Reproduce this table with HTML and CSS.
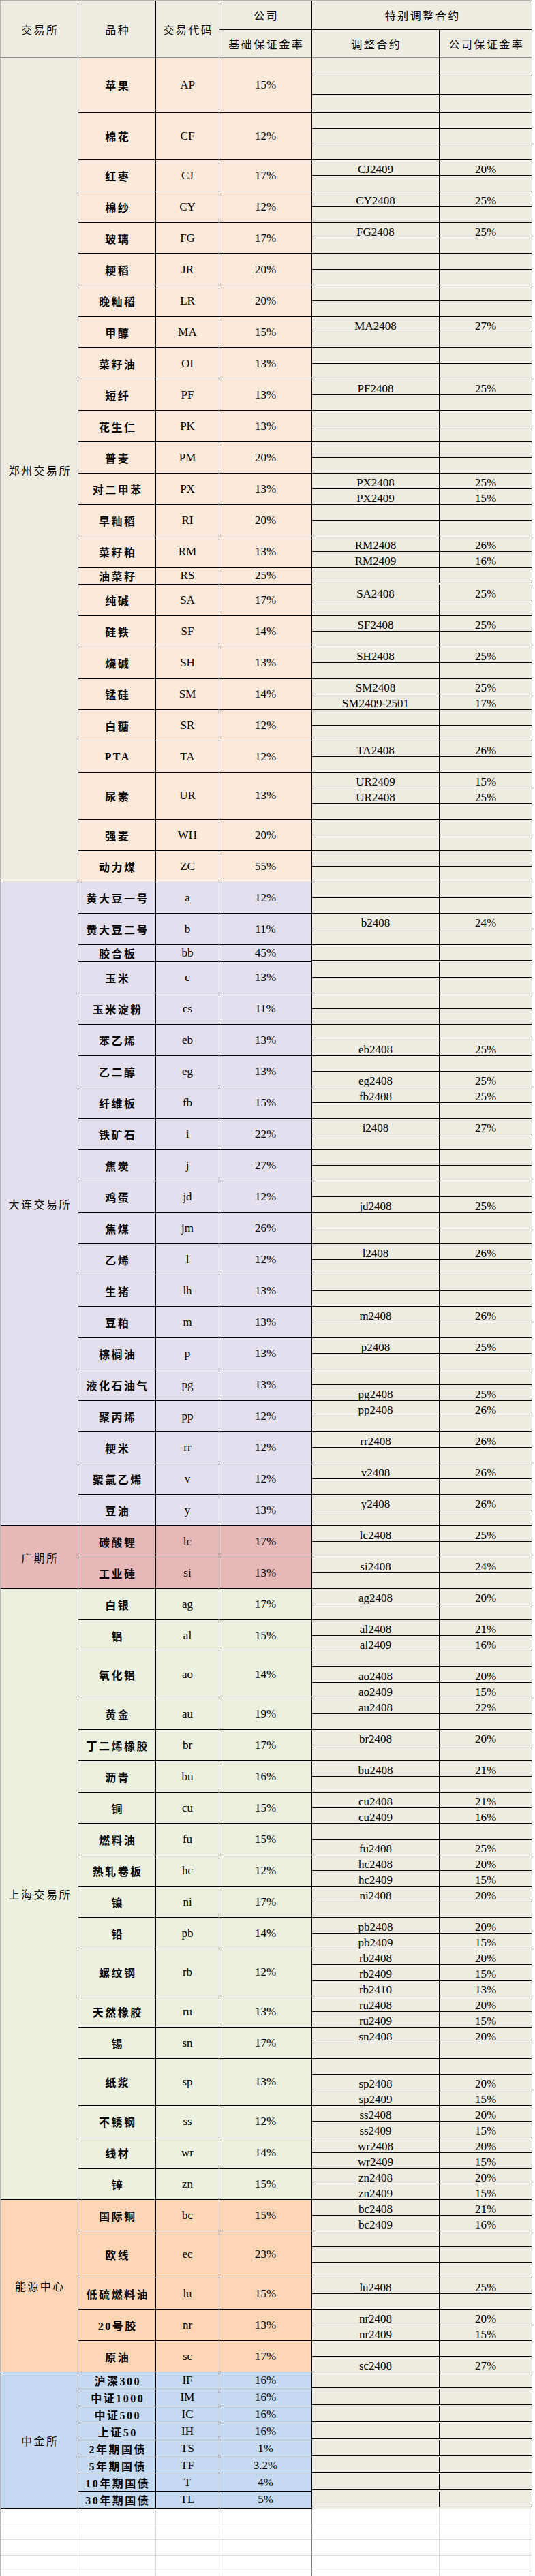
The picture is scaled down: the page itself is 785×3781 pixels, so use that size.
FILE: index.html
```html
<!DOCTYPE html>
<html lang="zh-CN">
<head>
<meta charset="utf-8">
<title>保证金率</title>
<link rel="stylesheet" href="styles.css">
</head>
<body>
<div class="sheet">
  <div class="head">
    <div class="h h-ex">交易所</div>
    <div class="h h-name">品种</div>
    <div class="h h-code">交易代码</div>
    <div class="h h-co">公司</div>
    <div class="h h-sp">特别调整合约</div>
    <div class="h h-base">基础保证金率</div>
    <div class="h h-ct">调整合约</div>
    <div class="h h-cr">公司保证金率</div>
  </div>

  <section class="ex zz">
    <div class="exn">郑州交易所</div>
    <div class="prods">
      <div class="prod"><div class="nm">苹果</div><div class="cd">AP</div><div class="rt">15%</div><div class="sp">
        <div class="sub tall"><span class="ct"></span><span class="cr"></span></div>
        <div class="sub tall"><span class="ct"></span><span class="cr"></span></div>
        <div class="sub tall"><span class="ct"></span><span class="cr"></span></div></div></div>
      <div class="prod"><div class="nm">棉花</div><div class="cd">CF</div><div class="rt">12%</div><div class="sp">
        <div class="sub"><span class="ct"></span><span class="cr"></span></div>
        <div class="sub"><span class="ct"></span><span class="cr"></span></div>
        <div class="sub"><span class="ct"></span><span class="cr"></span></div></div></div>
      <div class="prod"><div class="nm">红枣</div><div class="cd">CJ</div><div class="rt">17%</div><div class="sp">
        <div class="sub"><span class="ct">CJ2409</span><span class="cr">20%</span></div>
        <div class="sub"><span class="ct"></span><span class="cr"></span></div></div></div>
      <div class="prod"><div class="nm">棉纱</div><div class="cd">CY</div><div class="rt">12%</div><div class="sp">
        <div class="sub"><span class="ct">CY2408</span><span class="cr">25%</span></div>
        <div class="sub"><span class="ct"></span><span class="cr"></span></div></div></div>
      <div class="prod"><div class="nm">玻璃</div><div class="cd">FG</div><div class="rt">17%</div><div class="sp">
        <div class="sub"><span class="ct">FG2408</span><span class="cr">25%</span></div>
        <div class="sub"><span class="ct"></span><span class="cr"></span></div></div></div>
      <div class="prod"><div class="nm">粳稻</div><div class="cd">JR</div><div class="rt">20%</div><div class="sp">
        <div class="sub"><span class="ct"></span><span class="cr"></span></div>
        <div class="sub"><span class="ct"></span><span class="cr"></span></div></div></div>
      <div class="prod"><div class="nm">晚籼稻</div><div class="cd">LR</div><div class="rt">20%</div><div class="sp">
        <div class="sub"><span class="ct"></span><span class="cr"></span></div>
        <div class="sub"><span class="ct"></span><span class="cr"></span></div></div></div>
      <div class="prod"><div class="nm">甲醇</div><div class="cd">MA</div><div class="rt">15%</div><div class="sp">
        <div class="sub"><span class="ct">MA2408</span><span class="cr">27%</span></div>
        <div class="sub"><span class="ct"></span><span class="cr"></span></div></div></div>
      <div class="prod"><div class="nm">菜籽油</div><div class="cd">OI</div><div class="rt">13%</div><div class="sp">
        <div class="sub"><span class="ct"></span><span class="cr"></span></div>
        <div class="sub"><span class="ct"></span><span class="cr"></span></div></div></div>
      <div class="prod"><div class="nm">短纤</div><div class="cd">PF</div><div class="rt">13%</div><div class="sp">
        <div class="sub"><span class="ct">PF2408</span><span class="cr">25%</span></div>
        <div class="sub"><span class="ct"></span><span class="cr"></span></div></div></div>
      <div class="prod"><div class="nm">花生仁</div><div class="cd">PK</div><div class="rt">13%</div><div class="sp">
        <div class="sub"><span class="ct"></span><span class="cr"></span></div>
        <div class="sub"><span class="ct"></span><span class="cr"></span></div></div></div>
      <div class="prod"><div class="nm">普麦</div><div class="cd">PM</div><div class="rt">20%</div><div class="sp">
        <div class="sub"><span class="ct"></span><span class="cr"></span></div>
        <div class="sub"><span class="ct"></span><span class="cr"></span></div></div></div>
      <div class="prod"><div class="nm">对二甲苯</div><div class="cd">PX</div><div class="rt">13%</div><div class="sp">
        <div class="sub"><span class="ct">PX2408</span><span class="cr">25%</span></div>
        <div class="sub"><span class="ct">PX2409</span><span class="cr">15%</span></div></div></div>
      <div class="prod"><div class="nm">早籼稻</div><div class="cd">RI</div><div class="rt">20%</div><div class="sp">
        <div class="sub"><span class="ct"></span><span class="cr"></span></div>
        <div class="sub"><span class="ct"></span><span class="cr"></span></div></div></div>
      <div class="prod"><div class="nm">菜籽粕</div><div class="cd">RM</div><div class="rt">13%</div><div class="sp">
        <div class="sub"><span class="ct">RM2408</span><span class="cr">26%</span></div>
        <div class="sub"><span class="ct">RM2409</span><span class="cr">16%</span></div></div></div>
      <div class="prod"><div class="nm">油菜籽</div><div class="cd">RS</div><div class="rt">25%</div><div class="sp">
        <div class="sub"><span class="ct"></span><span class="cr"></span></div></div></div>
      <div class="prod"><div class="nm">纯碱</div><div class="cd">SA</div><div class="rt">17%</div><div class="sp">
        <div class="sub"><span class="ct">SA2408</span><span class="cr">25%</span></div>
        <div class="sub"><span class="ct"></span><span class="cr"></span></div></div></div>
      <div class="prod"><div class="nm">硅铁</div><div class="cd">SF</div><div class="rt">14%</div><div class="sp">
        <div class="sub"><span class="ct">SF2408</span><span class="cr">25%</span></div>
        <div class="sub"><span class="ct"></span><span class="cr"></span></div></div></div>
      <div class="prod"><div class="nm">烧碱</div><div class="cd">SH</div><div class="rt">13%</div><div class="sp">
        <div class="sub"><span class="ct">SH2408</span><span class="cr">25%</span></div>
        <div class="sub"><span class="ct"></span><span class="cr"></span></div></div></div>
      <div class="prod"><div class="nm">锰硅</div><div class="cd">SM</div><div class="rt">14%</div><div class="sp">
        <div class="sub"><span class="ct">SM2408</span><span class="cr">25%</span></div>
        <div class="sub"><span class="ct">SM2409-2501</span><span class="cr">17%</span></div></div></div>
      <div class="prod"><div class="nm">白糖</div><div class="cd">SR</div><div class="rt">12%</div><div class="sp">
        <div class="sub"><span class="ct"></span><span class="cr"></span></div>
        <div class="sub"><span class="ct"></span><span class="cr"></span></div></div></div>
      <div class="prod"><div class="nm">PTA</div><div class="cd">TA</div><div class="rt">12%</div><div class="sp">
        <div class="sub"><span class="ct">TA2408</span><span class="cr">26%</span></div>
        <div class="sub"><span class="ct"></span><span class="cr"></span></div></div></div>
      <div class="prod"><div class="nm">尿素</div><div class="cd">UR</div><div class="rt">13%</div><div class="sp">
        <div class="sub"><span class="ct">UR2409</span><span class="cr">15%</span></div>
        <div class="sub"><span class="ct">UR2408</span><span class="cr">25%</span></div>
        <div class="sub"><span class="ct"></span><span class="cr"></span></div></div></div>
      <div class="prod"><div class="nm">强麦</div><div class="cd">WH</div><div class="rt">20%</div><div class="sp">
        <div class="sub"><span class="ct"></span><span class="cr"></span></div>
        <div class="sub"><span class="ct"></span><span class="cr"></span></div></div></div>
      <div class="prod"><div class="nm">动力煤</div><div class="cd">ZC</div><div class="rt">55%</div><div class="sp">
        <div class="sub"><span class="ct"></span><span class="cr"></span></div>
        <div class="sub"><span class="ct"></span><span class="cr"></span></div></div></div>
    </div>
  </section>

  <section class="ex dl">
    <div class="exn">大连交易所</div>
    <div class="prods">
      <div class="prod"><div class="nm">黄大豆一号</div><div class="cd">a</div><div class="rt">12%</div><div class="sp">
        <div class="sub"><span class="ct"></span><span class="cr"></span></div>
        <div class="sub"><span class="ct"></span><span class="cr"></span></div></div></div>
      <div class="prod"><div class="nm">黄大豆二号</div><div class="cd">b</div><div class="rt">11%</div><div class="sp">
        <div class="sub"><span class="ct">b2408</span><span class="cr">24%</span></div>
        <div class="sub"><span class="ct"></span><span class="cr"></span></div></div></div>
      <div class="prod"><div class="nm">胶合板</div><div class="cd">bb</div><div class="rt">45%</div><div class="sp">
        <div class="sub"><span class="ct"></span><span class="cr"></span></div></div></div>
      <div class="prod"><div class="nm">玉米</div><div class="cd">c</div><div class="rt">13%</div><div class="sp">
        <div class="sub"><span class="ct"></span><span class="cr"></span></div>
        <div class="sub"><span class="ct"></span><span class="cr"></span></div></div></div>
      <div class="prod"><div class="nm">玉米淀粉</div><div class="cd">cs</div><div class="rt">11%</div><div class="sp">
        <div class="sub"><span class="ct"></span><span class="cr"></span></div>
        <div class="sub"><span class="ct"></span><span class="cr"></span></div></div></div>
      <div class="prod"><div class="nm">苯乙烯</div><div class="cd">eb</div><div class="rt">13%</div><div class="sp">
        <div class="sub"><span class="ct"></span><span class="cr"></span></div>
        <div class="sub"><span class="ct">eb2408</span><span class="cr">25%</span></div></div></div>
      <div class="prod"><div class="nm">乙二醇</div><div class="cd">eg</div><div class="rt">13%</div><div class="sp">
        <div class="sub"><span class="ct"></span><span class="cr"></span></div>
        <div class="sub"><span class="ct">eg2408</span><span class="cr">25%</span></div></div></div>
      <div class="prod"><div class="nm">纤维板</div><div class="cd">fb</div><div class="rt">15%</div><div class="sp">
        <div class="sub"><span class="ct">fb2408</span><span class="cr">25%</span></div>
        <div class="sub"><span class="ct"></span><span class="cr"></span></div></div></div>
      <div class="prod"><div class="nm">铁矿石</div><div class="cd">i</div><div class="rt">22%</div><div class="sp">
        <div class="sub"><span class="ct">i2408</span><span class="cr">27%</span></div>
        <div class="sub"><span class="ct"></span><span class="cr"></span></div></div></div>
      <div class="prod"><div class="nm">焦炭</div><div class="cd">j</div><div class="rt">27%</div><div class="sp">
        <div class="sub"><span class="ct"></span><span class="cr"></span></div>
        <div class="sub"><span class="ct"></span><span class="cr"></span></div></div></div>
      <div class="prod"><div class="nm">鸡蛋</div><div class="cd">jd</div><div class="rt">12%</div><div class="sp">
        <div class="sub"><span class="ct"></span><span class="cr"></span></div>
        <div class="sub"><span class="ct">jd2408</span><span class="cr">25%</span></div></div></div>
      <div class="prod"><div class="nm">焦煤</div><div class="cd">jm</div><div class="rt">26%</div><div class="sp">
        <div class="sub"><span class="ct"></span><span class="cr"></span></div>
        <div class="sub"><span class="ct"></span><span class="cr"></span></div></div></div>
      <div class="prod"><div class="nm">乙烯</div><div class="cd">l</div><div class="rt">12%</div><div class="sp">
        <div class="sub"><span class="ct">l2408</span><span class="cr">26%</span></div>
        <div class="sub"><span class="ct"></span><span class="cr"></span></div></div></div>
      <div class="prod"><div class="nm">生猪</div><div class="cd">lh</div><div class="rt">13%</div><div class="sp">
        <div class="sub"><span class="ct"></span><span class="cr"></span></div>
        <div class="sub"><span class="ct"></span><span class="cr"></span></div></div></div>
      <div class="prod"><div class="nm">豆粕</div><div class="cd">m</div><div class="rt">13%</div><div class="sp">
        <div class="sub"><span class="ct">m2408</span><span class="cr">26%</span></div>
        <div class="sub"><span class="ct"></span><span class="cr"></span></div></div></div>
      <div class="prod"><div class="nm">棕榈油</div><div class="cd">p</div><div class="rt">13%</div><div class="sp">
        <div class="sub"><span class="ct">p2408</span><span class="cr">25%</span></div>
        <div class="sub"><span class="ct"></span><span class="cr"></span></div></div></div>
      <div class="prod"><div class="nm">液化石油气</div><div class="cd">pg</div><div class="rt">13%</div><div class="sp">
        <div class="sub"><span class="ct"></span><span class="cr"></span></div>
        <div class="sub"><span class="ct">pg2408</span><span class="cr">25%</span></div></div></div>
      <div class="prod"><div class="nm">聚丙烯</div><div class="cd">pp</div><div class="rt">12%</div><div class="sp">
        <div class="sub"><span class="ct">pp2408</span><span class="cr">26%</span></div>
        <div class="sub"><span class="ct"></span><span class="cr"></span></div></div></div>
      <div class="prod"><div class="nm">粳米</div><div class="cd">rr</div><div class="rt">12%</div><div class="sp">
        <div class="sub"><span class="ct">rr2408</span><span class="cr">26%</span></div>
        <div class="sub"><span class="ct"></span><span class="cr"></span></div></div></div>
      <div class="prod"><div class="nm">聚氯乙烯</div><div class="cd">v</div><div class="rt">12%</div><div class="sp">
        <div class="sub"><span class="ct">v2408</span><span class="cr">26%</span></div>
        <div class="sub"><span class="ct"></span><span class="cr"></span></div></div></div>
      <div class="prod"><div class="nm">豆油</div><div class="cd">y</div><div class="rt">13%</div><div class="sp">
        <div class="sub"><span class="ct">y2408</span><span class="cr">26%</span></div>
        <div class="sub"><span class="ct"></span><span class="cr"></span></div></div></div>
    </div>
  </section>

  <section class="ex gz">
    <div class="exn">广期所</div>
    <div class="prods">
      <div class="prod"><div class="nm">碳酸锂</div><div class="cd">lc</div><div class="rt">17%</div><div class="sp">
        <div class="sub"><span class="ct">lc2408</span><span class="cr">25%</span></div>
        <div class="sub"><span class="ct"></span><span class="cr"></span></div></div></div>
      <div class="prod"><div class="nm">工业硅</div><div class="cd">si</div><div class="rt">13%</div><div class="sp">
        <div class="sub"><span class="ct">si2408</span><span class="cr">24%</span></div>
        <div class="sub"><span class="ct"></span><span class="cr"></span></div></div></div>
    </div>
  </section>

  <section class="ex sh">
    <div class="exn">上海交易所</div>
    <div class="prods">
      <div class="prod"><div class="nm">白银</div><div class="cd">ag</div><div class="rt">17%</div><div class="sp">
        <div class="sub"><span class="ct">ag2408</span><span class="cr">20%</span></div>
        <div class="sub"><span class="ct"></span><span class="cr"></span></div></div></div>
      <div class="prod"><div class="nm">铝</div><div class="cd">al</div><div class="rt">15%</div><div class="sp">
        <div class="sub"><span class="ct">al2408</span><span class="cr">21%</span></div>
        <div class="sub"><span class="ct">al2409</span><span class="cr">16%</span></div></div></div>
      <div class="prod"><div class="nm">氧化铝</div><div class="cd">ao</div><div class="rt">14%</div><div class="sp">
        <div class="sub"><span class="ct"></span><span class="cr"></span></div>
        <div class="sub"><span class="ct">ao2408</span><span class="cr">20%</span></div>
        <div class="sub"><span class="ct">ao2409</span><span class="cr">15%</span></div></div></div>
      <div class="prod"><div class="nm">黄金</div><div class="cd">au</div><div class="rt">19%</div><div class="sp">
        <div class="sub"><span class="ct">au2408</span><span class="cr">22%</span></div>
        <div class="sub"><span class="ct"></span><span class="cr"></span></div></div></div>
      <div class="prod"><div class="nm">丁二烯橡胶</div><div class="cd">br</div><div class="rt">17%</div><div class="sp">
        <div class="sub"><span class="ct">br2408</span><span class="cr">20%</span></div>
        <div class="sub"><span class="ct"></span><span class="cr"></span></div></div></div>
      <div class="prod"><div class="nm">沥青</div><div class="cd">bu</div><div class="rt">16%</div><div class="sp">
        <div class="sub"><span class="ct">bu2408</span><span class="cr">21%</span></div>
        <div class="sub"><span class="ct"></span><span class="cr"></span></div></div></div>
      <div class="prod"><div class="nm">铜</div><div class="cd">cu</div><div class="rt">15%</div><div class="sp">
        <div class="sub"><span class="ct">cu2408</span><span class="cr">21%</span></div>
        <div class="sub"><span class="ct">cu2409</span><span class="cr">16%</span></div></div></div>
      <div class="prod"><div class="nm">燃料油</div><div class="cd">fu</div><div class="rt">15%</div><div class="sp">
        <div class="sub"><span class="ct"></span><span class="cr"></span></div>
        <div class="sub"><span class="ct">fu2408</span><span class="cr">25%</span></div></div></div>
      <div class="prod"><div class="nm">热轧卷板</div><div class="cd">hc</div><div class="rt">12%</div><div class="sp">
        <div class="sub"><span class="ct">hc2408</span><span class="cr">20%</span></div>
        <div class="sub"><span class="ct">hc2409</span><span class="cr">15%</span></div></div></div>
      <div class="prod"><div class="nm">镍</div><div class="cd">ni</div><div class="rt">17%</div><div class="sp">
        <div class="sub"><span class="ct">ni2408</span><span class="cr">20%</span></div>
        <div class="sub"><span class="ct"></span><span class="cr"></span></div></div></div>
      <div class="prod"><div class="nm">铅</div><div class="cd">pb</div><div class="rt">14%</div><div class="sp">
        <div class="sub"><span class="ct">pb2408</span><span class="cr">20%</span></div>
        <div class="sub"><span class="ct">pb2409</span><span class="cr">15%</span></div></div></div>
      <div class="prod"><div class="nm">螺纹钢</div><div class="cd">rb</div><div class="rt">12%</div><div class="sp">
        <div class="sub"><span class="ct">rb2408</span><span class="cr">20%</span></div>
        <div class="sub"><span class="ct">rb2409</span><span class="cr">15%</span></div>
        <div class="sub"><span class="ct">rb2410</span><span class="cr">13%</span></div></div></div>
      <div class="prod"><div class="nm">天然橡胶</div><div class="cd">ru</div><div class="rt">13%</div><div class="sp">
        <div class="sub"><span class="ct">ru2408</span><span class="cr">20%</span></div>
        <div class="sub"><span class="ct">ru2409</span><span class="cr">15%</span></div></div></div>
      <div class="prod"><div class="nm">锡</div><div class="cd">sn</div><div class="rt">17%</div><div class="sp">
        <div class="sub"><span class="ct">sn2408</span><span class="cr">20%</span></div>
        <div class="sub"><span class="ct"></span><span class="cr"></span></div></div></div>
      <div class="prod"><div class="nm">纸浆</div><div class="cd">sp</div><div class="rt">13%</div><div class="sp">
        <div class="sub"><span class="ct"></span><span class="cr"></span></div>
        <div class="sub"><span class="ct">sp2408</span><span class="cr">20%</span></div>
        <div class="sub"><span class="ct">sp2409</span><span class="cr">15%</span></div></div></div>
      <div class="prod"><div class="nm">不锈钢</div><div class="cd">ss</div><div class="rt">12%</div><div class="sp">
        <div class="sub"><span class="ct">ss2408</span><span class="cr">20%</span></div>
        <div class="sub"><span class="ct">ss2409</span><span class="cr">15%</span></div></div></div>
      <div class="prod"><div class="nm">线材</div><div class="cd">wr</div><div class="rt">14%</div><div class="sp">
        <div class="sub"><span class="ct">wr2408</span><span class="cr">20%</span></div>
        <div class="sub"><span class="ct">wr2409</span><span class="cr">15%</span></div></div></div>
      <div class="prod"><div class="nm">锌</div><div class="cd">zn</div><div class="rt">15%</div><div class="sp">
        <div class="sub"><span class="ct">zn2408</span><span class="cr">20%</span></div>
        <div class="sub"><span class="ct">zn2409</span><span class="cr">15%</span></div></div></div>
    </div>
  </section>

  <section class="ex ny">
    <div class="exn">能源中心</div>
    <div class="prods">
      <div class="prod"><div class="nm">国际铜</div><div class="cd">bc</div><div class="rt">15%</div><div class="sp">
        <div class="sub"><span class="ct">bc2408</span><span class="cr">21%</span></div>
        <div class="sub"><span class="ct">bc2409</span><span class="cr">16%</span></div></div></div>
      <div class="prod"><div class="nm">欧线</div><div class="cd">ec</div><div class="rt">23%</div><div class="sp">
        <div class="sub"><span class="ct"></span><span class="cr"></span></div>
        <div class="sub"><span class="ct"></span><span class="cr"></span></div>
        <div class="sub"><span class="ct"></span><span class="cr"></span></div></div></div>
      <div class="prod"><div class="nm">低硫燃料油</div><div class="cd">lu</div><div class="rt">15%</div><div class="sp">
        <div class="sub"><span class="ct">lu2408</span><span class="cr">25%</span></div>
        <div class="sub"><span class="ct"></span><span class="cr"></span></div></div></div>
      <div class="prod"><div class="nm">20号胶</div><div class="cd">nr</div><div class="rt">13%</div><div class="sp">
        <div class="sub"><span class="ct">nr2408</span><span class="cr">20%</span></div>
        <div class="sub"><span class="ct">nr2409</span><span class="cr">15%</span></div></div></div>
      <div class="prod"><div class="nm">原油</div><div class="cd">sc</div><div class="rt">17%</div><div class="sp">
        <div class="sub"><span class="ct"></span><span class="cr"></span></div>
        <div class="sub"><span class="ct">sc2408</span><span class="cr">27%</span></div></div></div>
    </div>
  </section>

  <section class="ex zj">
    <div class="exn">中金所</div>
    <div class="prods">
      <div class="prod"><div class="nm">沪深300</div><div class="cd">IF</div><div class="rt">16%</div><div class="sp">
        <div class="sub"><span class="ct"></span><span class="cr"></span></div></div></div>
      <div class="prod"><div class="nm">中证1000</div><div class="cd">IM</div><div class="rt">16%</div><div class="sp">
        <div class="sub"><span class="ct"></span><span class="cr"></span></div></div></div>
      <div class="prod"><div class="nm">中证500</div><div class="cd">IC</div><div class="rt">16%</div><div class="sp">
        <div class="sub"><span class="ct"></span><span class="cr"></span></div></div></div>
      <div class="prod"><div class="nm">上证50</div><div class="cd">IH</div><div class="rt">16%</div><div class="sp">
        <div class="sub"><span class="ct"></span><span class="cr"></span></div></div></div>
      <div class="prod"><div class="nm">2年期国债</div><div class="cd">TS</div><div class="rt">1%</div><div class="sp">
        <div class="sub"><span class="ct"></span><span class="cr"></span></div></div></div>
      <div class="prod"><div class="nm">5年期国债</div><div class="cd">TF</div><div class="rt">3.2%</div><div class="sp">
        <div class="sub"><span class="ct"></span><span class="cr"></span></div></div></div>
      <div class="prod"><div class="nm">10年期国债</div><div class="cd">T</div><div class="rt">4%</div><div class="sp">
        <div class="sub"><span class="ct"></span><span class="cr"></span></div></div></div>
      <div class="prod"><div class="nm">30年期国债</div><div class="cd">TL</div><div class="rt">5%</div><div class="sp">
        <div class="sub"><span class="ct"></span><span class="cr"></span></div></div></div>
    </div>
  </section>

  <div class="blank">
    <div class="brow"><span></span><span></span><span></span><span class="dk"></span><span></span><span></span></div>
    <div class="brow"><span></span><span></span><span></span><span class="dk"></span><span></span><span></span></div>
    <div class="brow"><span></span><span></span><span></span><span class="dk"></span><span></span><span></span></div>
    <div class="brow"><span></span><span></span><span></span><span class="dk"></span><span></span><span></span></div>
    <div class="brow"><span></span><span></span><span></span><span class="dk"></span><span></span><span></span></div>
    <div class="brow"><span></span><span></span><span></span><span class="dk"></span><span></span><span></span></div>
  </div>
</div>
</body>
</html>
```

FILE: styles.css
```css
* { box-sizing: border-box; }

body {
  margin: 0;
  background: #ffffff;
  color: #000000;
  font-family: "Liberation Serif", "Noto Sans CJK SC", serif;
}

.sheet {
  width: 781px;
  border-left: 1px solid #b4b4b4;
  border-top: 1px solid #b4b4b4;
}

/* ---------- header ---------- */
.head {
  display: grid;
  grid-template-columns: 114px 114px 93px 136px 187px 136px;
  grid-template-rows: 43px 41px;
  background: #eeece1;
}

.h {
  display: flex;
  align-items: center;
  justify-content: center;
  font-family: "Noto Sans CJK SC", sans-serif;
  font-size: 16px;
  letter-spacing: 2.5px;
  padding-left: 2.5px;
  border-right: 1px solid #000;
  border-bottom: 1px solid #000;
}

.h-ex   { grid-column: 1; grid-row: 1 / 3; border-bottom-color: #8c8c8c; }
.h-name { grid-column: 2; grid-row: 1 / 3; border-bottom-color: #8c8c8c; }
.h-code { grid-column: 3; grid-row: 1 / 3; border-bottom-color: #8c8c8c; }
.h-co   { grid-column: 4; grid-row: 1; }
.h-sp   { grid-column: 5 / 7; grid-row: 1; }
.h-base { grid-column: 4; grid-row: 2; border-bottom-color: #8c8c8c; }
.h-ct   { grid-column: 5; grid-row: 2; border-bottom-color: #8c8c8c; }
.h-cr   { grid-column: 6; grid-row: 2; border-bottom-color: #8c8c8c; }

/* ---------- sections ---------- */
.ex {
  display: flex;
}

.exn {
  width: 114px;
  flex: none;
  display: flex;
  align-items: center;
  justify-content: center;
  font-family: "Noto Sans CJK SC", sans-serif;
  font-size: 16px;
  letter-spacing: 2.5px;
  padding-left: 2.5px;
  border-right: 1px solid #000;
  border-bottom: 1px solid #000;
}

.prods {
  display: flex;
  flex-direction: column;
}

.prod {
  display: flex;
}

.nm, .cd, .rt {
  display: flex;
  align-items: center;
  justify-content: center;
  border-right: 1px solid #000;
  border-bottom: 1px solid #000;
}

.nm {
  width: 114px;
  font-family: "Liberation Serif", "Noto Sans CJK SC", serif;
  font-weight: 700;
  font-size: 16px;
  letter-spacing: 2.5px;
  padding-left: 2.5px;
}

.cd {
  width: 93px;
  font-size: 17px;
}

.rt {
  width: 136px;
  font-size: 17px;
}

.sp {
  display: flex;
  flex-direction: column;
  background: #eeece1;
}

.sub {
  display: flex;
  height: 23px;
  border-bottom: 1px solid #000;
}

.sub.tall {
  height: 27px;
}

.ct, .cr {
  display: flex;
  align-items: flex-end;
  justify-content: center;
  font-size: 17px;
  line-height: 16px;
  border-right: 1px solid #000;
}

.ct { width: 187px; }
.cr { width: 136px; }

/* ---------- exchange colours ---------- */
.zz .exn { background: #eeece1; }
.zz .nm, .zz .cd, .zz .rt { background: #fde9d9; }

.dl .exn, .dl .nm, .dl .cd, .dl .rt { background: #e4dfec; }

.gz .exn, .gz .nm, .gz .cd, .gz .rt { background: #e6b8b7; }

.sh .exn, .sh .nm, .sh .cd, .sh .rt { background: #ebf1de; }

.ny .exn, .ny .nm, .ny .cd, .ny .rt { background: #fcd5b4; }

.zj .exn, .zj .nm, .zj .cd, .zj .rt { background: #c5d9f1; }

/* ---------- empty grid below ---------- */
.brow {
  display: flex;
  height: 23px;
}

.brow span {
  height: 23px;
  border-right: 1px solid #d9d9d9;
  border-bottom: 1px solid #d9d9d9;
}

.brow span:nth-child(1) { width: 114px; }
.brow span:nth-child(2) { width: 114px; }
.brow span:nth-child(3) { width: 93px; }
.brow span:nth-child(4) { width: 136px; }
.brow span:nth-child(5) { width: 187px; }
.brow span:nth-child(6) { width: 136px; }

.brow span.dk { border-right-color: #7f7f7f; }
```
